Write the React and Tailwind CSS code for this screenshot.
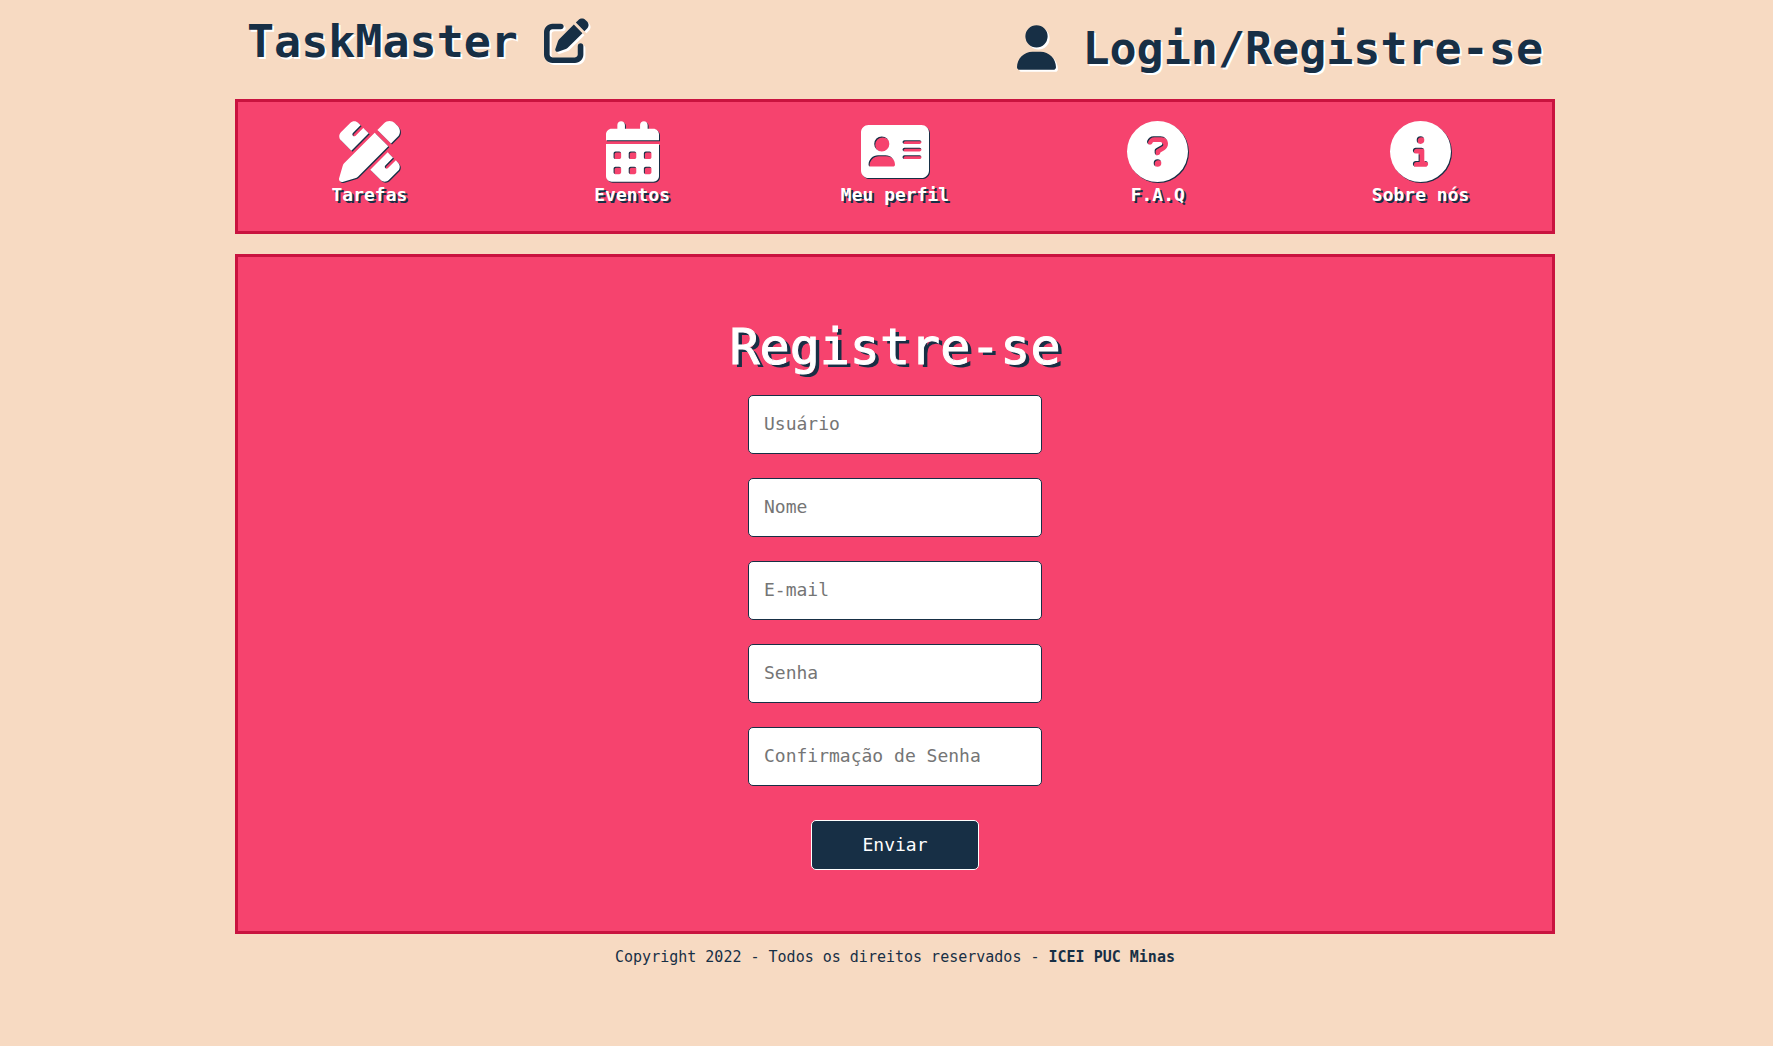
import {
  FaAddressCard,
  FaCalendarDays,
  FaCircleInfo,
  FaCircleQuestion,
  FaPenRuler,
  FaPenToSquare,
  FaUser,
} from "react-icons/fa6";

const navItems = [
  { label: "Tarefas", Icon: FaPenRuler, width: "w-[61px]" },
  { label: "Eventos", Icon: FaCalendarDays, width: "w-[53px]" },
  { label: "Meu perfil", Icon: FaAddressCard, width: "w-[68px]" },
  { label: "F.A.Q", Icon: FaCircleQuestion, width: "w-[61px]" },
  { label: "Sobre nós", Icon: FaCircleInfo, width: "w-[61px]" },
];

const fields = [
  { id: "usuario", label: "Usuário", type: "text" },
  { id: "nome", label: "Nome", type: "text" },
  { id: "email", label: "E-mail", type: "email" },
  { id: "senha", label: "Senha", type: "password" },
  { id: "confirmacao", label: "Confirmação de Senha", type: "password" },
];

function Header() {
  return (
    <header className="mb-5 flex items-start justify-between px-3 pt-[9px] text-[45px] leading-[60px] font-bold">
      <a href="#inicio" className="flex items-center gap-[26px] [text-shadow:2px_2px_#fff]">
        <h1 className="pt-[3px]">TaskMaster</h1>
        <FaPenToSquare className="h-[45px] w-[45px] drop-shadow-[2px_2px_0_#fff]" />
      </a>
      <a href="#login" className="mt-[7px] flex items-center gap-[26px] [text-shadow:2px_2px_#fff]">
        <FaUser className="h-[45px] w-[39px] drop-shadow-[2px_2px_0_#fff]" />
        <span className="pt-[3px]">Login/Registre-se</span>
      </a>
    </header>
  );
}

function Nav() {
  return (
    <nav className="grid grid-cols-5 border-[3px] border-[#c9133f] bg-[#f6436e] pt-[19px] pb-6 text-white">
      {navItems.map(({ label, Icon, width }) => (
        <a key={label} href="#" className="flex flex-col items-center gap-px">
          <Icon className={`h-[61px] ${width} drop-shadow-[1px_1px_0_#172f45]`} />
          <span className="text-lg leading-6 font-bold [text-shadow:2px_2px_#172f45]">{label}</span>
        </a>
      ))}
    </nav>
  );
}

function RegisterForm() {
  return (
    <main className="mt-5 flex flex-col items-center border-[3px] border-[#c9133f] bg-[#f6436e] pt-[53px] pb-[61px]">
      <h2 className="mb-[10px] text-[50px] leading-[75px] font-medium text-white [-webkit-text-stroke:1px_#fff] [text-shadow:4px_3px_#172f45]">
        Registre-se
      </h2>
      <form className="flex flex-col items-center gap-6" onSubmit={(e) => e.preventDefault()}>
        {fields.map(({ id, label, type }) => (
          <input
            key={id}
            id={id}
            type={type}
            aria-label={label}
            placeholder={label}
            className="h-[59px] w-[294px] rounded-[5px] border border-[#172f45] bg-white px-[15px] pb-[2px] text-lg text-[#172f45] placeholder:text-[#757575]"
          />
        ))}
        <button
          type="submit"
          className="mt-[10px] h-[50px] w-[168px] rounded-[5px] border border-white bg-[#172f45] text-lg text-white"
        >
          Enviar
        </button>
      </form>
    </main>
  );
}

export default function App() {
  return (
    <div className="min-h-screen bg-[#f7dac2] pl-[17px] font-['DejaVu_Sans_Mono',monospace] text-[#172f45]">
      <div className="mx-auto max-w-[1320px]">
        <Header />
        <Nav />
        <RegisterForm />
        <footer className="mt-3 text-center text-[15px] leading-[22px]">
          Copyright 2022 - Todos os direitos reservados - <strong>ICEI PUC Minas</strong>
        </footer>
      </div>
    </div>
  );
}
